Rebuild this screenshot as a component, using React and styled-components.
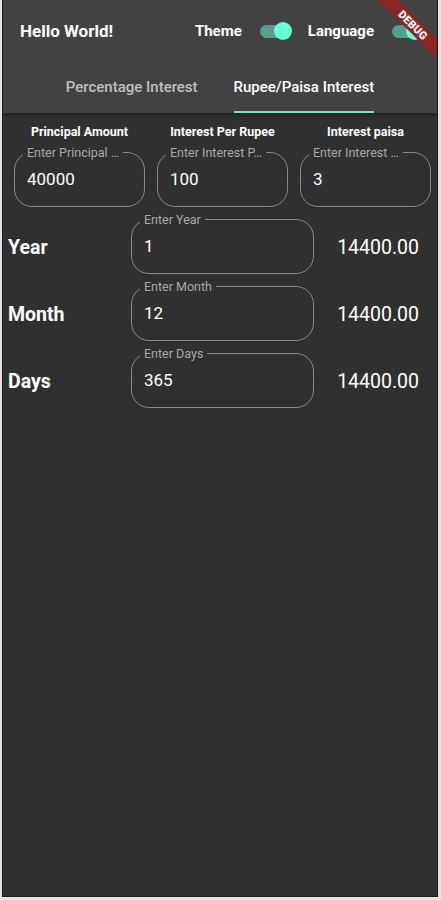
import styled, { createGlobalStyle } from "styled-components";

const GlobalStyle = createGlobalStyle`
  html, body {
    margin: 0;
    padding: 0;
    background: #e4e4e4;
  }
  body {
    font-family: Roboto, "Liberation Sans", sans-serif;
  }
`;

const Frame = styled.div`
  padding: 0 4px 4px 3px;
  width: 441px;
  box-sizing: border-box;
`;

const Screen = styled.div`
  position: relative;
  width: 434px;
  height: 896px;
  background: #303030;
  overflow: hidden;
  box-shadow: 0 0 0 1px #1e1e1e;
  display: flex;
  flex-direction: column;
  color: #fff;
`;

const AppBar = styled.header`
  background: #424242;
  box-shadow: 0 2px 4px rgba(0, 0, 0, 0.35);
  position: relative;
  z-index: 1;
`;

const TopRow = styled.div`
  height: 62px;
  display: flex;
  align-items: center;
  padding: 0 9px 0 17px;
`;

const Title = styled.h1`
  margin: 0;
  font-size: 17px;
  font-weight: 700;
`;

const Actions = styled.div`
  margin-left: auto;
  display: flex;
  align-items: center;
`;

const ActionLabel = styled.span`
  font-size: 15px;
  font-weight: 700;
  margin-right: 16px;
`;

const Switch = styled.div`
  position: relative;
  width: 38px;
  height: 20px;
  margin-right: ${(p) => (p.last ? "0" : "12px")};
`;

const Track = styled.span`
  position: absolute;
  left: 2px;
  top: 4px;
  width: 28px;
  height: 13px;
  border-radius: 7px;
  background: ${(p) => (p.on ? "#53a08e" : "#6a6a6a")};
`;

const Thumb = styled.span`
  position: absolute;
  left: ${(p) => (p.on ? "16px" : "0")};
  top: 1px;
  width: 18px;
  height: 18px;
  border-radius: 50%;
  background: ${(p) => (p.on ? "#64ffda" : "#bdbdbd")};
`;

const TabBar = styled.nav`
  display: flex;
  justify-content: center;
  height: 51px;
`;

const Tab = styled.div`
  padding: 0 18px;
  display: flex;
`;

const TabLabel = styled.span`
  display: flex;
  align-items: center;
  padding-top: 1px;
  font-size: 15px;
  font-weight: 500;
  color: ${(p) => (p.active ? "#ffffff" : "rgba(255,255,255,0.68)")};
  border-bottom: 2px solid ${(p) => (p.active ? "#62e8ca" : "transparent")};
`;

const DebugBanner = styled.div`
  position: absolute;
  top: 18px;
  right: -31px;
  width: 110px;
  height: 14px;
  background: #8e2424;
  transform: rotate(45deg);
  z-index: 5;
  display: flex;
  align-items: center;
  justify-content: center;
  font-size: 11px;
  font-weight: 900;
  letter-spacing: 0.2px;
  color: #fff;
`;

const Body = styled.main`
  padding-top: 12px;
`;

const InputGrid = styled.div`
  display: grid;
  grid-template-columns: repeat(3, 131px);
  column-gap: 12px;
  padding-left: 11px;
`;

const Column = styled.div`
  display: flex;
  flex-direction: column;
  align-items: center;
`;

const Heading = styled.div`
  font-size: 12.5px;
  font-weight: 700;
  line-height: 14px;
  margin-bottom: 6px;
`;

const Field = styled.fieldset`
  margin: 0;
  width: 100%;
  box-sizing: border-box;
  border: 1px solid #8a8a8a;
  border-radius: 18px;
  padding: 0 8px;
  min-width: 0;
`;

const Legend = styled.legend`
  font-size: 12.5px;
  line-height: 15px;
  color: #a9a9a9;
  padding: 0 4px;
  white-space: nowrap;
`;

const Value = styled.input`
  display: block;
  width: 100%;
  box-sizing: border-box;
  height: 46px;
  padding: 0 0 8px 4px;
  margin: 0;
  border: none;
  outline: none;
  background: transparent;
  color: #fff;
  font-family: Roboto, "Liberation Sans", sans-serif;
  font-size: 17px;
`;

const Rows = styled.div`
  margin-top: 5px;
  display: flex;
  flex-direction: column;
  gap: 5px;
`;

const Row = styled.div`
  display: grid;
  grid-template-columns: 123px 183px 1fr;
  align-items: center;
  padding: 0 18px 0 5px;
`;

const RowLabel = styled.div`
  font-size: 19.5px;
  font-weight: 700;
  padding-top: 8px;
`;

const Result = styled.div`
  font-size: 19.5px;
  text-align: right;
  padding-top: 8px;
`;

const topFields = [
  { heading: "Principal Amount", hint: "Enter Principal …", value: "40000" },
  { heading: "Interest Per Rupee", hint: "Enter Interest P…", value: "100" },
  { heading: "Interest paisa", hint: "Enter Interest …", value: "3" },
];

const periods = [
  { label: "Year", hint: "Enter Year", value: "1", result: "14400.00" },
  { label: "Month", hint: "Enter Month", value: "12", result: "14400.00" },
  { label: "Days", hint: "Enter Days", value: "365", result: "14400.00" },
];

const Toggle = ({ on, last }) => (
  <Switch last={last}>
    <Track on={on} />
    <Thumb on={on} />
  </Switch>
);

export default function App() {
  return (
    <>
      <GlobalStyle />
      <Frame>
        <Screen>
          <DebugBanner>DEBUG</DebugBanner>
          <AppBar>
            <TopRow>
              <Title>Hello World!</Title>
              <Actions>
                <ActionLabel>Theme</ActionLabel>
                <Toggle on />
                <ActionLabel>Language</ActionLabel>
                <Toggle on last />
              </Actions>
            </TopRow>
            <TabBar>
              <Tab>
                <TabLabel>Percentage Interest</TabLabel>
              </Tab>
              <Tab>
                <TabLabel active>Rupee/Paisa Interest</TabLabel>
              </Tab>
            </TabBar>
          </AppBar>
          <Body>
            <InputGrid>
              {topFields.map((f) => (
                <Column key={f.heading}>
                  <Heading>{f.heading}</Heading>
                  <Field>
                    <Legend>{f.hint}</Legend>
                    <Value defaultValue={f.value} readOnly />
                  </Field>
                </Column>
              ))}
            </InputGrid>
            <Rows>
              {periods.map((p) => (
                <Row key={p.label}>
                  <RowLabel>{p.label}</RowLabel>
                  <Field>
                    <Legend>{p.hint}</Legend>
                    <Value defaultValue={p.value} readOnly />
                  </Field>
                  <Result>{p.result}</Result>
                </Row>
              ))}
            </Rows>
          </Body>
        </Screen>
      </Frame>
    </>
  );
}
